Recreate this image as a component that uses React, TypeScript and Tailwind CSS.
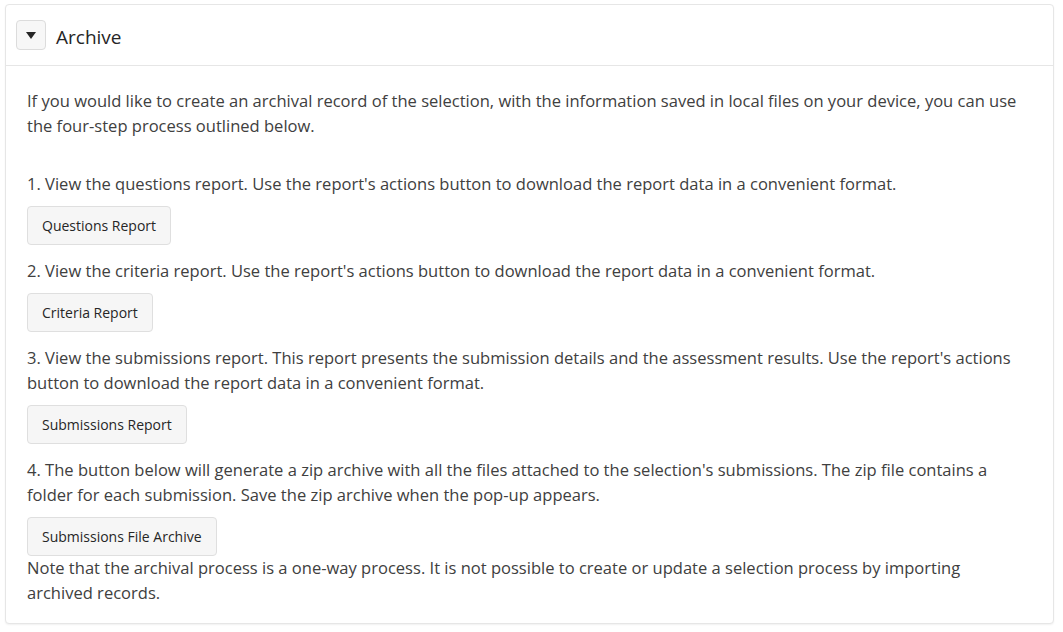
const steps = [
  {
    text: "1. View the questions report. Use the report's actions button to download the report data in a convenient format.",
    button: "Questions Report",
  },
  {
    text: "2. View the criteria report. Use the report's actions button to download the report data in a convenient format.",
    button: "Criteria Report",
  },
  {
    text: "3. View the submissions report. This report presents the submission details and the assessment results. Use the report's actions button to download the report data in a convenient format.",
    button: "Submissions Report",
  },
  {
    text: "4. The button below will generate a zip archive with all the files attached to the selection's submissions. The zip file contains a folder for each submission. Save the zip archive when the pop-up appears.",
    button: "Submissions File Archive",
  },
];

export default function App() {
  return (
    <div className="min-h-[632px] w-[1063px] bg-white pt-1 pl-[5px] pr-[9px] font-['Open_Sans','Noto_Sans',sans-serif] text-[#404040]">
      <section className="rounded-sm border border-[#e6e6e6] bg-white shadow-[0_1px_2px_rgba(0,0,0,0.06)]">
        <header className="flex h-[61px] items-center gap-[10px] border-b border-[#e6e6e6] px-[10px]">
          <button className="flex h-[30px] w-[30px] items-center justify-center rounded-sm border border-[#dcdcdc] bg-[#f7f7f7]">
            <svg width="10" height="7" viewBox="0 0 10 7">
              <path d="M0 0h10L5 7z" fill="#262626" />
            </svg>
          </button>
          <h2 className="pt-[4px] text-[19px] leading-none text-[#262626]">Archive</h2>
        </header>
        <div className="pl-[21px] pr-[30px] pt-[22px] pb-[18px] text-[16.55px] leading-[25px]">
          <p className="mb-[33px]">
            If you would like to create an archival record of the selection, with the information saved in local files on your device, you can use the four-step process outlined below.
          </p>
          {steps.map((s) => (
            <div key={s.button}>
              <p>{s.text}</p>
              <button className="mt-[10px] mb-[13px] h-[39px] rounded-sm border border-[#dfdfdf] bg-[#f6f6f6] px-[14px] text-[14px] text-[#262626]">
                {s.button}
              </button>
            </div>
          ))}
          <p className="-mt-[14px]">
            Note that the archival process is a one-way process. It is not possible to create or update a selection process by importing archived records.
          </p>
        </div>
      </section>
    </div>
  );
}
